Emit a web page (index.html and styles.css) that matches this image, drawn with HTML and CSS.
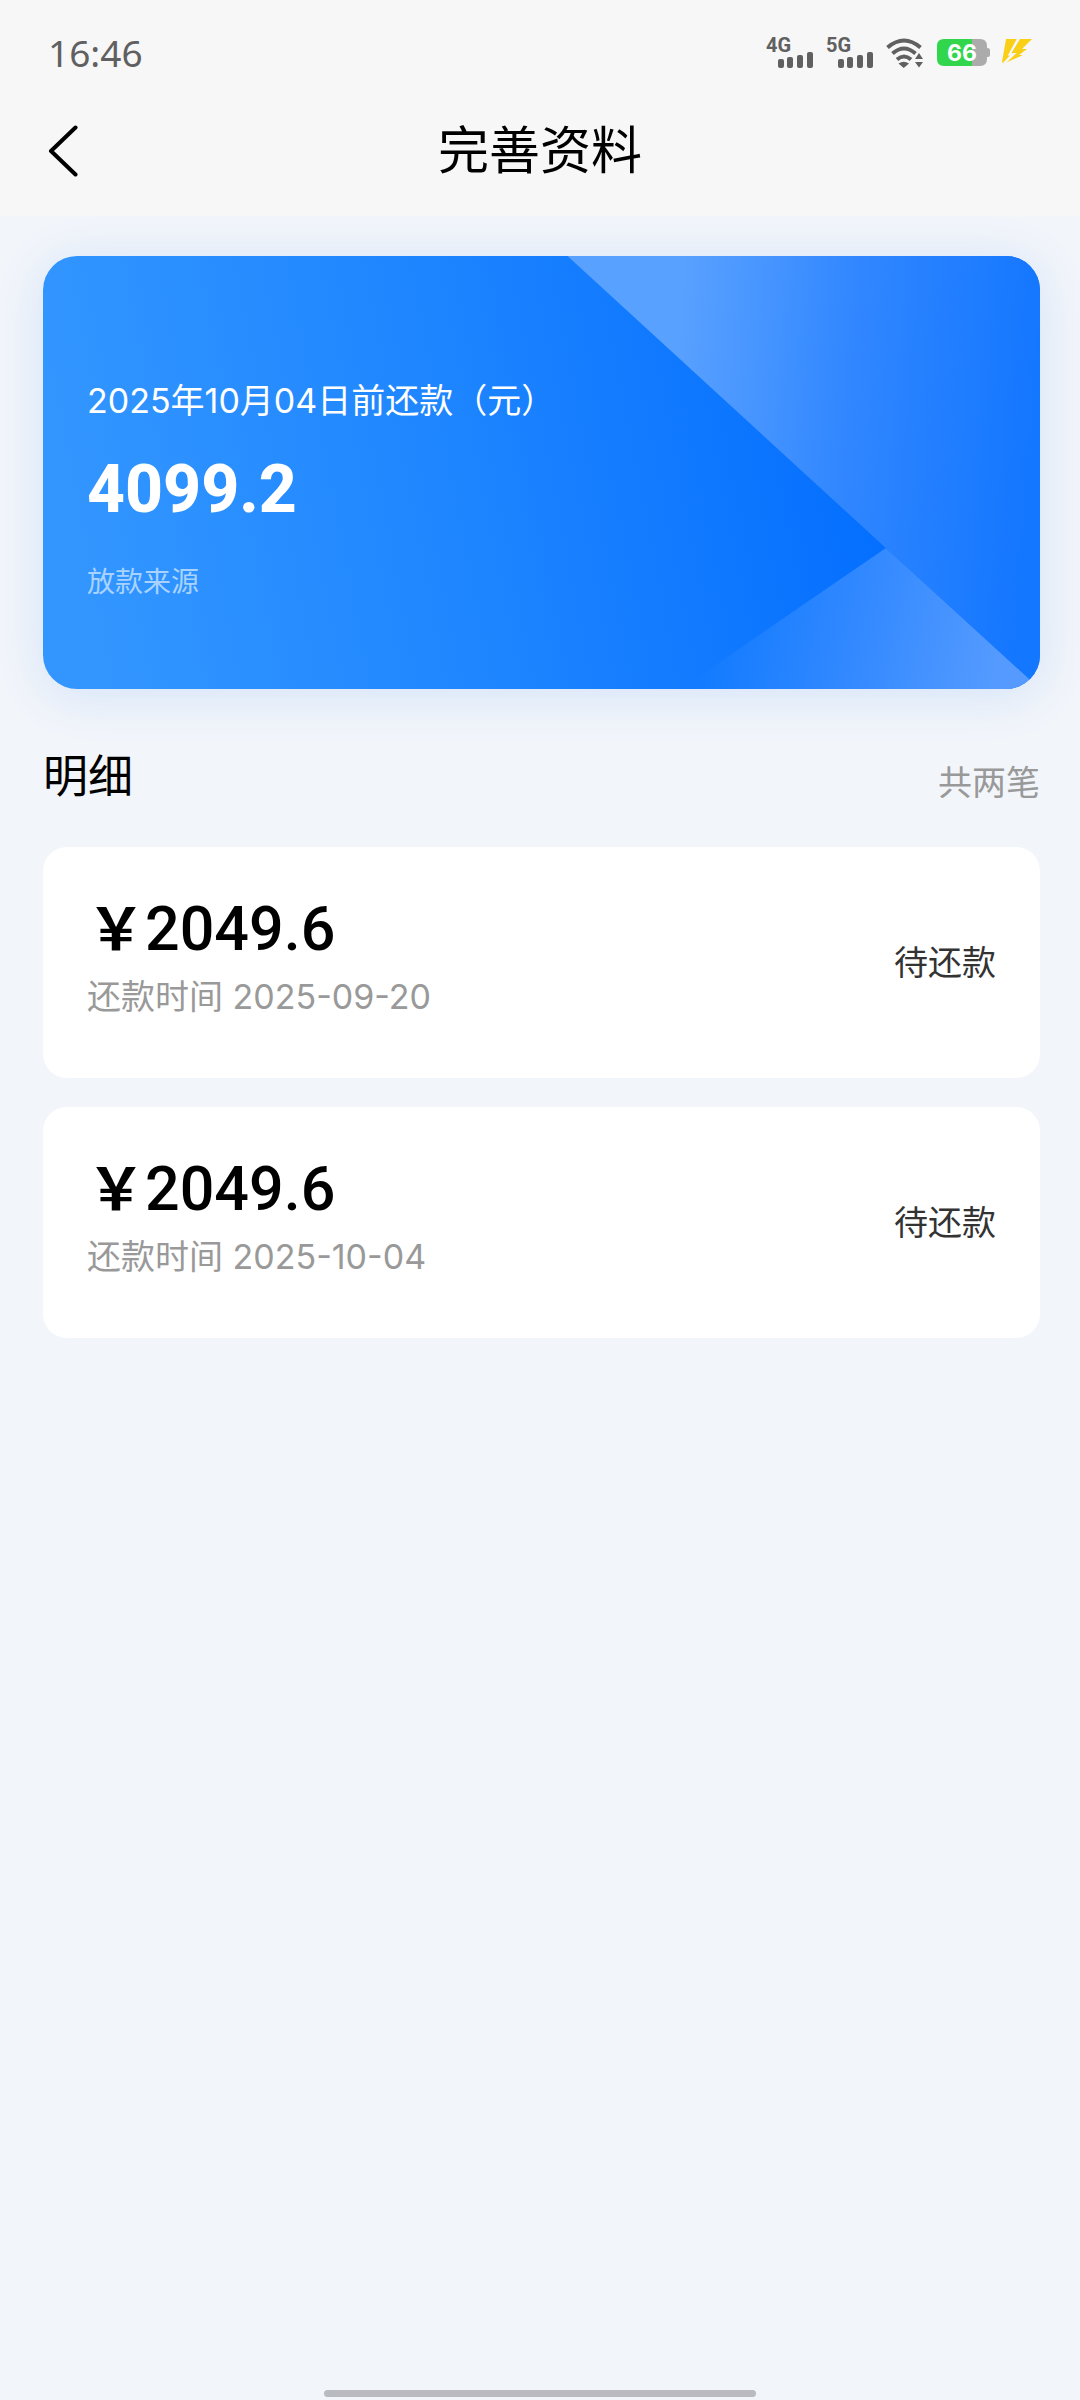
FILE: index.html
```html
<!DOCTYPE html>
<html lang="zh-CN">
<head>
<meta charset="utf-8">
<meta name="viewport" content="width=device-width, initial-scale=1">
<title>完善资料</title>
<link rel="stylesheet" href="styles.css">
</head>
<body>
<div class="top">
  <div class="status">
    <time class="clock">16:46</time>
    <div class="status-icons">
      <svg class="signal" width="48" height="48" viewBox="0 -8 48 48" role="img" aria-label="4G">
        <text x="0" y="15" class="net">4G</text>
        <rect x="12" y="22" width="6" height="9" rx="2"/><rect x="21" y="20" width="6" height="11" rx="2"/><rect x="31" y="18" width="6" height="13" rx="2"/><rect x="41" y="15" width="6" height="16" rx="2"/>
      </svg>
      <svg class="signal" width="48" height="48" viewBox="0 -8 48 48" role="img" aria-label="5G">
        <text x="0" y="15" class="net">5G</text>
        <rect x="12" y="22" width="6" height="9" rx="2"/><rect x="21" y="20" width="6" height="11" rx="2"/><rect x="31" y="18" width="6" height="13" rx="2"/><rect x="41" y="15" width="6" height="16" rx="2"/>
      </svg>
      <svg width="38" height="34" viewBox="0 0 38 34" aria-hidden="true">
        <g fill="none" stroke="#606060" stroke-width="4">
          <path d="M1.500 11.500Q18 -2.500 34.500 11.500"/>
          <path d="M6.500 17.500Q18 7.500 29.500 17.500"/>
          <path d="M11 23.500Q18 17.500 25 23.500"/>
        </g>
        <path d="M12.500 27.500Q17.700 24 23 27.500L17.700 32Z" fill="#606060"/>
        <path d="M29 23L33 17L37 23ZM29 26H37L33 31.500Z" fill="#606060"/>
      </svg>
      <svg width="54" height="46" viewBox="0 -8 54 46" role="img" aria-label="66%">
        <path d="M34 1H44Q51 1 51 8V10Q54 10 54 12V17Q54 19 51 19V21Q51 28 44 28H34Z" fill="#ababab"/>
        <path d="M8 1H36V28H8Q1 28 1 21V8Q1 1 8 1Z" fill="#31d64d"/>
        <text x="26" y="23" class="charge">66</text>
      </svg>
      <svg width="30" height="30" viewBox="0 0 30 30" aria-hidden="true">
        <path d="M4 1H15L8 14L12 13L1 25L0 24Z" fill="#f9cf18"/>
        <path d="M18 1H30L20 11L25 11L17 17L21 17L1 26L11 17L8 17Z" fill="#f9cf18"/>
        <path d="M16.500 0L7.500 16.500L12 16L2 25.500" fill="none" stroke="#f7f7f7" stroke-width="2"/>
      </svg>
    </div>
  </div>
  <header class="nav">
    <button class="back" type="button" aria-label="返回">
      <svg width="30" height="52" viewBox="0 0 30 52" aria-hidden="true"><path d="M27.500 2.500L3 26L27.500 49.500" fill="none" stroke="#000" stroke-width="4" stroke-linecap="round" stroke-linejoin="round"/></svg>
    </button>
    <h1 class="title">完善资料</h1>
  </header>
</div>
<main class="content">
  <section class="hero">
    <svg class="hero-art" viewBox="0 0 996 433" preserveAspectRatio="none" aria-hidden="true">
      <defs>
        <linearGradient id="base" gradientUnits="userSpaceOnUse" x1="40" y1="340" x2="860" y2="180">
          <stop offset="0" stop-color="#3396ff"/><stop offset=".5" stop-color="#1c84ff"/><stop offset="1" stop-color="#026dff"/>
        </linearGradient>
        <linearGradient id="upper" gradientUnits="userSpaceOnUse" x1="630" y1="120" x2="990" y2="150">
          <stop offset="0" stop-color="#59a1ff"/><stop offset=".5" stop-color="#3086ff"/><stop offset="1" stop-color="#1477ff"/>
        </linearGradient>
        <linearGradient id="lower" gradientUnits="userSpaceOnUse" x1="665" y1="380" x2="950" y2="440">
          <stop offset="0" stop-color="#127bff"/><stop offset=".5" stop-color="#3389ff"/><stop offset="1" stop-color="#559bff"/>
        </linearGradient>
      </defs>
      <rect width="996" height="433" fill="url(#base)"/>
      <path d="M524 0H996V433L842 292Z" fill="url(#upper)"/>
      <path d="M842 292L996 433H637Z" fill="url(#lower)"/>
    </svg>
    <p class="due">2025年10月04日前还款（元）</p>
    <p class="total">4099.2</p>
    <p class="source">放款来源</p>
  </section>
  <div class="section-head">
    <h2 class="section-title">明细</h2>
    <span class="count">共两笔</span>
  </div>
  <ul class="bills">
    <li class="bill">
      <div>
        <p class="amount"><span class="yen">￥</span>2049.6</p>
        <p class="date">还款时间 2025-09-20</p>
      </div>
      <span class="state">待还款</span>
    </li>
    <li class="bill">
      <div>
        <p class="amount"><span class="yen">￥</span>2049.6</p>
        <p class="date">还款时间 2025-10-04</p>
      </div>
      <span class="state">待还款</span>
    </li>
  </ul>
</main>
<div class="home-bar"></div>
</body>
</html>
```
FILE: styles.css
```css
* { box-sizing: border-box; }
body, h1, h2, p, ul { margin: 0; padding: 0; }
body {
  min-height: 100vh;
  display: flex;
  flex-direction: column;
  background: #f2f5fa;
  color: #000;
  font-family: Inter, "Noto Sans CJK SC", sans-serif;
  font-size: 34px;
  line-height: 50px;
}
h1, h2 { font-weight: 400; }
svg { display: block; }

.top { background: #f7f7f7; }
.status {
  display: flex;
  justify-content: space-between;
  align-items: center;
  height: 86px;
  padding: 20px 48px 0;
}
.clock {
  color: #606060;
  font-family: "Noto Sans", sans-serif;
  font-size: 37px;
}
.status-icons { display: flex; align-items: center; gap: 12px; }
.signal { fill: #606060; }
.net { font: 700 20px Roboto, sans-serif; }
.charge { font: 700 23px Inter, sans-serif; fill: #fff; text-anchor: middle; }

.nav {
  display: grid;
  grid-template-columns: 1fr auto 1fr;
  align-items: center;
  height: 130px;
  padding: 0 48px;
}
.back {
  justify-self: start;
  padding: 0;
  border: 0;
  background: none;
}
.title { font-size: 51px; line-height: 72px; }

.content { flex: 1; padding: 40px 40px 0 43px; }
.hero {
  position: relative;
  min-height: 433px;
  padding: 120px 44px 78px;
  border-radius: 34px;
  overflow: hidden;
  color: #fff;
  box-shadow: 0 6px 50px rgba(30, 120, 240, .14);
}
.hero-art { position: absolute; inset: 0; width: 100%; height: 100%; }
.due, .total, .source { position: relative; }
.total {
  margin-top: 24px;
  font: 800 66px/80px Roboto, sans-serif;
}
.source { margin-top: 27px; font-size: 28px; color: #a9d3ff; }

.section-head {
  display: flex;
  justify-content: space-between;
  align-items: center;
  padding: 56px 0 38px;
}
.section-title { font-size: 45px; line-height: 64px; }
.count { padding-top: 12px; color: #999; }

.bills { display: grid; gap: 29px; list-style: none; }
.bill {
  display: flex;
  justify-content: space-between;
  align-items: center;
  min-height: 230px;
  padding: 44px 44px 56px;
  border-radius: 24px;
  background: #fff;
}
.amount {
  font: 500 61px/76px Roboto, "Noto Sans CJK SC", sans-serif;
}
.yen { font-size: 58px; font-weight: 700; }
.date { margin-top: 4px; color: #999; }
.state { padding-top: 12px; color: #333; }

.home-bar {
  width: 40%;
  height: 7px;
  margin: 20px auto 3px;
  border-radius: 4px;
  background: #b9bbc0;
}
```
